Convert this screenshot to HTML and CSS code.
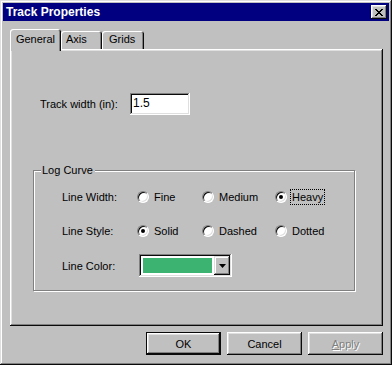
FILE: index.html
```html
<!DOCTYPE html>
<html lang="en">
<head>
  <meta charset="UTF-8">
  <title>Track Properties</title>
  <link rel="stylesheet" href="styles.css">
</head>
<body>

<div class="window">
  <!-- Title bar -->
  <div class="titlebar">
    <span class="title">Track Properties</span>
    <button class="close-btn">
      <svg width="8" height="7" viewBox="0 0 8 7"><path d="M0 0h2v1h1v1h2V1h1V0h2v1H7v1H6v1H5v1h1v1h1v1h1v1H6V6H5V5H3v1H2v1H0V6h1V5h1V4h1V3H2V2H1V1H0z" fill="#000"/></svg>
    </button>
  </div>

  <div class="dialog-body">
    <!-- Tabs -->
    <div class="tabs">
      <div class="tab tab-active">General</div>
      <div class="tab tab-axis">Axis</div>
      <div class="tab tab-grids">Grids</div>
    </div>

    <div class="panel">
      <div class="field-row">
        <span class="field-label">Track width (in):</span>
        <div class="text-input">1.5</div>
      </div>

      <fieldset class="group">
        <legend>Log Curve</legend>
        <div class="group-grid">
          <span class="row-label">Line Width:</span>
          <span class="radio-item"><span class="radio"></span><span class="radio-text">Fine</span></span>
          <span class="radio-item"><span class="radio"></span><span class="radio-text">Medium</span></span>
          <span class="radio-item"><span class="radio checked"></span><span class="radio-text focused">Heavy</span></span>

          <span class="row-label">Line Style:</span>
          <span class="radio-item"><span class="radio checked"></span><span class="radio-text">Solid</span></span>
          <span class="radio-item"><span class="radio"></span><span class="radio-text">Dashed</span></span>
          <span class="radio-item"><span class="radio"></span><span class="radio-text">Dotted</span></span>

          <span class="row-label">Line Color:</span>
          <div class="combo">
            <span class="swatch"></span>
            <span class="combo-btn">
              <svg width="7" height="4" viewBox="0 0 7 4"><polygon points="0,0 7,0 3.5,4" fill="#000"/></svg>
            </span>
          </div>
        </div>
      </fieldset>
    </div>

    <!-- Dialog buttons -->
    <div class="button-row">
      <button class="btn btn-default">OK</button>
      <button class="btn">Cancel</button>
      <button class="btn btn-disabled"><u>A</u>pply</button>
    </div>
  </div>
</div>

</body>
</html>
```

FILE: styles.css
```css
body {
  margin: 0;
  padding: 0;
  background: #c0c0c0;
  font-family: "Liberation Sans", Arial, sans-serif;
  font-size: 11px;
  color: #000;
}

.window {
  width: 392px;
  height: 365px;
  box-sizing: border-box;
  padding: 3px;
  background: #c0c0c0;
  box-shadow: inset -1px -1px #0a0a0a, inset 1px 1px #dfdfdf, inset -2px -2px #808080, inset 2px 2px #fff;
}

.titlebar {
  height: 18px;
  background: #000080;
  display: flex;
  align-items: center;
  justify-content: space-between;
  padding: 0 2px 0 3px;
}

.title {
  color: #fff;
  font-weight: bold;
  font-size: 12px;
}

.close-btn {
  width: 16px;
  height: 14px;
  padding: 0;
  border: none;
  background: #c0c0c0;
  display: flex;
  align-items: center;
  justify-content: center;
  box-shadow: inset -1px -1px #0a0a0a, inset 1px 1px #fff, inset -2px -2px #808080, inset 2px 2px #dfdfdf;
}

.dialog-body {
  padding: 8px 0 0 7px;
}

/* Tabs */
.tabs {
  display: flex;
  align-items: flex-end;
  height: 22px;
  margin-bottom: -2px;
  position: relative;
  z-index: 1;
}

.tab {
  height: 18px;
  margin-bottom: 2px;
  box-sizing: border-box;
  background: #c0c0c0;
  border-radius: 3px 3px 0 0;
  line-height: 17px;
  box-shadow: inset 1px 1px #fff, inset -1px 0 #0a0a0a, inset -2px 0 #808080;
}

.tab-active {
  width: 51px;
  height: 22px;
  margin-bottom: 0;
  text-align: center;
  line-height: 20px;
}

.tab-axis {
  width: 41px;
  padding-left: 5px;
}

.tab-grids {
  width: 42px;
  padding-left: 7px;
}

.panel {
  width: 373px;
  height: 277px;
  box-sizing: border-box;
  padding: 44px 0 0 30px;
  box-shadow: inset -1px -1px #0a0a0a, inset 1px 1px #fff, inset -2px -2px #808080, inset 2px 2px #dfdfdf;
}

.field-row {
  display: flex;
  align-items: center;
}

.field-label {
  width: 90px;
}

.text-input {
  width: 60px;
  height: 22px;
  box-sizing: border-box;
  background: #fff;
  padding: 3px 0 0 3px;
  font-size: 12px;
  box-shadow: inset -1px -1px #fff, inset 1px 1px #808080, inset -2px -2px #dfdfdf, inset 2px 2px #0a0a0a;
}

/* Group box */
.group {
  width: 322px;
  height: 127px;
  box-sizing: border-box;
  margin: 49px 0 0 -7px;
  padding: 11px 0 0 7px;
  border: 1px solid #808080;
  box-shadow: 1px 1px 0 #fff, inset 1px 1px #fff;
}

.group legend {
  padding: 0 2px 0 1px;
  line-height: 12px;
  background: #c0c0c0;
}

.group-grid {
  margin-left: 21px;
  display: grid;
  grid-template-columns: 75px 65px 73px auto;
  grid-template-rows: 20px 19px 23px;
  row-gap: 14px;
  align-items: center;
}

.radio-item {
  display: flex;
  align-items: center;
}

.radio {
  width: 12px;
  height: 12px;
  box-sizing: border-box;
  border-radius: 50%;
  background: #fff;
  border: 1px solid;
  border-color: #808080 #fff #fff #808080;
  box-shadow: inset 1px 1px #0a0a0a, inset -1px -1px #dfdfdf;
  display: flex;
  align-items: center;
  justify-content: center;
}

.radio.checked::after {
  content: "";
  width: 4px;
  height: 4px;
  border-radius: 50%;
  background: #000;
}

.radio-text {
  margin-left: 3px;
  padding: 1px;
  border: 1px solid transparent;
}

.radio-text.focused {
  border: 1px dotted #000;
}

.combo {
  grid-column: 2 / -1;
  justify-self: start;
  width: 93px;
  height: 23px;
  margin-left: 2px;
  box-sizing: border-box;
  padding: 2px;
  display: flex;
  background: #fff;
  box-shadow: inset -1px -1px #fff, inset 1px 1px #808080, inset -2px -2px #dfdfdf, inset 2px 2px #0a0a0a;
}

.swatch {
  flex: 1;
  margin: 2px;
  background: #3cb371;
}

.combo-btn {
  width: 16px;
  display: flex;
  align-items: center;
  justify-content: center;
  background: #c0c0c0;
  box-shadow: inset -1px -1px #0a0a0a, inset 1px 1px #dfdfdf, inset -2px -2px #808080, inset 2px 2px #fff;
}

/* Buttons */
.button-row {
  width: 373px;
  display: flex;
  justify-content: flex-end;
  gap: 6px;
  margin-top: 6px;
}

.btn {
  width: 75px;
  height: 23px;
  padding: 0;
  border: none;
  background: #c0c0c0;
  font-family: "Liberation Sans", Arial, sans-serif;
  font-size: 11px;
  color: #000;
  box-shadow: inset -1px -1px #0a0a0a, inset 1px 1px #fff, inset -2px -2px #808080, inset 2px 2px #dfdfdf;
}

.btn-default {
  box-shadow: inset 0 0 0 1px #0a0a0a, inset -2px -2px #0a0a0a, inset 2px 2px #fff, inset -3px -3px #808080, inset 3px 3px #dfdfdf;
}

.btn-disabled {
  color: #808080;
  text-shadow: 1px 1px #fff;
}
```
